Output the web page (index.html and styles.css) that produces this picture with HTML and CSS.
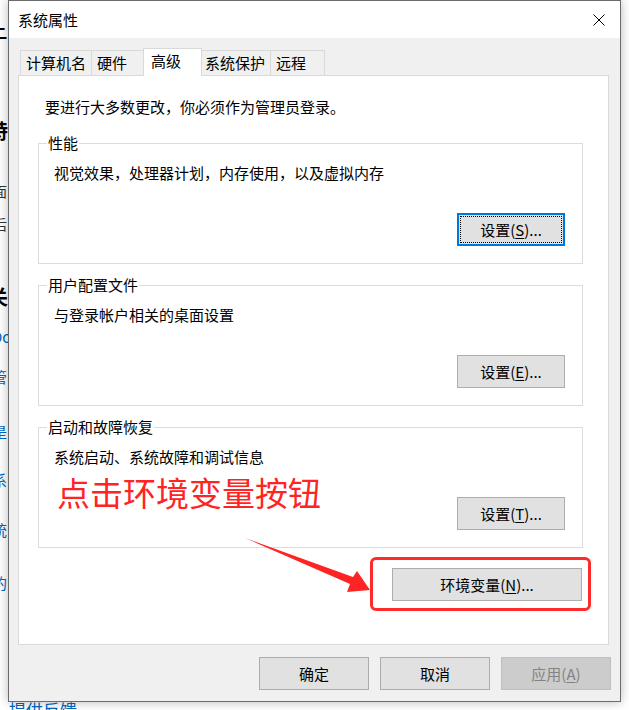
FILE: index.html
```html
<!DOCTYPE html>
<html lang="zh-CN">
<head>
<meta charset="utf-8">
<title>系统属性</title>
<link rel="stylesheet" href="styles.css">
</head>
<body>
<div class="desktop">
  <div class="bgwin">
    <div class="bg-h">关于</div>
    <div class="bg-b">特</div>
    <div class="bg-s bg-s1">面</div>
    <div class="bg-s bg-s2">后</div>
    <div class="bg-h2">关</div>
    <div class="bg-l bg-l1">Do</div>
    <div class="bg-l bg-l2">管</div>
    <div class="bg-l bg-l3">是</div>
    <div class="bg-l bg-l4">系</div>
    <div class="bg-l bg-l5">统</div>
    <div class="bg-l bg-l6">的</div>
    <div class="bg-feedback">提供反馈</div>
  </div>

  <div class="dialog">
    <div class="titlebar">
      <span class="title">系统属性</span>
      <span class="close">
        <svg width="12" height="12" viewBox="0 0 12 12"><path d="M0.5 0.5 L11.5 11.5 M11.5 0.5 L0.5 11.5" stroke="#000" stroke-width="1" fill="none"/></svg>
      </span>
    </div>
    <div class="client">
      <div class="tabs">
        <div class="tab">计算机名</div>
        <div class="tab">硬件</div>
        <div class="tab selected">高级</div>
        <div class="tab">系统保护</div>
        <div class="tab">远程</div>
      </div>
      <div class="panel">
        <p class="note">要进行大多数更改，你必须作为管理员登录。</p>
        <fieldset class="group first">
          <legend>性能</legend>
          <p class="desc">视觉效果，处理器计划，内存使用，以及虚拟内存</p>
          <div class="actions"><button class="btn small focused">设置(<u>S</u>)...</button></div>
        </fieldset>
        <fieldset class="group">
          <legend>用户配置文件</legend>
          <p class="desc">与登录帐户相关的桌面设置</p>
          <div class="actions"><button class="btn small">设置(<u>E</u>)...</button></div>
        </fieldset>
        <fieldset class="group">
          <legend>启动和故障恢复</legend>
          <p class="desc">系统启动、系统故障和调试信息</p>
          <div class="actions"><button class="btn small">设置(<u>T</u>)...</button></div>
        </fieldset>
        <div class="env-row"><button class="btn env">环境变量(<u>N</u>)...</button></div>
      </div>
      <div class="footer">
        <button class="btn wide">确定</button>
        <button class="btn wide">取消</button>
        <button class="btn wide" disabled>应用(<u>A</u>)</button>
      </div>
    </div>
  </div>

  <div class="annot">
    <div class="callout-text">点击环境变量按钮</div>
    <div class="callout-box"></div>
    <svg class="callout-arrow" width="629" height="710" viewBox="0 0 629 710">
      <polygon points="245,538 353,577 357,571 370,590 347,592 350,584" fill="#ff2424"/>
    </svg>
  </div>
</div>
</body>
</html>
```

FILE: styles.css
```css
* { box-sizing: border-box; }
html, body { margin: 0; padding: 0; }
body {
  width: 629px;
  height: 710px;
  overflow: hidden;
  background: #fff;
  font-family: "Noto Sans CJK SC", "Noto Sans", sans-serif;
  font-size: 15px;
  color: #000;
}
.desktop {
  position: relative;
  width: 629px;
  height: 710px;
  overflow: hidden;
  background: #fff;
}

/* background window fragments */
.bgwin {
  position: absolute;
  left: -8px;
  top: 0;
  width: 140px;
  height: 710px;
  white-space: nowrap;
}
.bg-h { font-size: 28px; line-height: 36px; height: 36px; margin-top: 20px; margin-left: -40px; }
.bg-b { font-size: 20px; line-height: 22px; height: 22px; margin-top: 64px; margin-left: -4px; font-weight: bold; }
.bg-s { font-size: 14px; line-height: 20px; height: 20px; color: #333; margin-left: 1px; }
.bg-s1 { margin-top: 39px; }
.bg-s2 { margin-top: 13px; }
.bg-h2 { font-size: 20px; line-height: 22px; height: 22px; margin-top: 52px; margin-left: -4px; font-weight: bold; }
.bg-l { font-size: 15px; line-height: 20px; height: 20px; color: #0067c0; }
.bg-l1 { margin-top: 19px; }
.bg-l2 { margin-top: 20px; }
.bg-l3 { margin-top: 35px; }
.bg-l4 { margin-top: 28px; }
.bg-l5 { margin-top: 30px; }
.bg-l6 { margin-top: 33px; }
.bg-feedback { font-size: 17px; line-height: 20px; color: #0067c0; margin-top: 107px; margin-left: 17px; }

/* dialog */
.dialog {
  position: relative;
  z-index: 1;
  margin-left: 8px;
  width: 613px;
  height: 702px;
  border: 1px solid #6b6b6b;
  background: #f0f0f0;
  box-shadow: 0 0 10px rgba(0, 0, 0, 0.28);
  display: flex;
  flex-direction: column;
}
.titlebar {
  height: 37px;
  flex: none;
  background: #fff;
  display: flex;
  align-items: center;
  justify-content: space-between;
  padding-left: 9px;
}
.title { font-size: 15px; line-height: 20px; }
.close {
  width: 42px;
  height: 37px;
  display: flex;
  align-items: center;
  justify-content: center;
}
.close svg { display: block; }

.client {
  flex: 1;
  display: flex;
  flex-direction: column;
  padding: 10px 9px 11px 9px;
}
.tabs {
  display: flex;
  align-items: flex-end;
  height: 27px;
  padding-left: 2px;
}
.tab {
  height: 25px;
  min-width: 55px;
  padding: 0 5px;
  border: 1px solid #d9d9d9;
  border-bottom: none;
  margin-left: -1px;
  background: #f0f0f0;
  font-size: 15px;
  line-height: 24px;
  white-space: nowrap;
}
.tab:first-child { margin-left: 0; }
.tab.selected {
  position: relative;
  z-index: 1;
  height: 28px;
  min-width: 59px;
  padding: 0 7px;
  margin: 0 -2px -1px -3px;
  background: #fff;
  line-height: 24px;
}

.panel {
  height: 570px;
  margin-right: 2px;
  border: 1px solid #d9d9d9;
  background: #fff;
  padding-top: 21px;
  display: flex;
  flex-direction: column;
}
.note {
  margin: 0 0 0 26px;
  font-size: 15px;
  line-height: 20px;
}
.group {
  margin: 11px 25px 0 19px;
  min-width: 0;
  border: 1px solid #dcdcdc;
  padding: 0 17px 17px 15px;
}
.group.first { margin-top: 16px; }
.group legend {
  font-size: 15px;
  line-height: 20px;
  padding: 0 1px;
  margin-left: -7px;
}
.desc {
  margin: 10px 0 0 0;
  font-size: 15px;
  line-height: 20px;
}
.actions {
  margin-top: 30px;
  display: flex;
  justify-content: flex-end;
}

.btn {
  font-family: inherit;
  font-size: 15px;
  color: #000;
  height: 33px;
  line-height: 31px;
  padding: 0;
  background: #e1e1e1;
  border: 1px solid #adadad;
  border-radius: 0;
  white-space: nowrap;
}
.btn u { text-decoration-thickness: 1px; text-underline-offset: 2px; }
.btn.small { width: 108px; }
.btn.focused {
  position: relative;
  border: 2px solid #0078d7;
  line-height: 29px;
}
.btn.focused::after {
  content: "";
  position: absolute;
  left: 1px;
  top: 1px;
  right: 1px;
  bottom: 1px;
  border: 1px dotted #000;
}
.btn.env { width: 190px; }
.btn.wide { width: 110px; }
.btn:disabled {
  background: #cccccc;
  border-color: #bfbfbf;
  color: #838383;
}

.env-row {
  margin-top: 20px;
  display: flex;
  justify-content: flex-end;
  padding-right: 26px;
}
.footer {
  margin-top: 12px;
  display: flex;
  justify-content: flex-end;
  gap: 11px;
}

/* annotation overlay */
.annot {
  position: absolute;
  left: 0;
  top: 0;
  width: 629px;
  height: 710px;
  z-index: 2;
  pointer-events: none;
}
.callout-text {
  position: absolute;
  left: 57px;
  top: 475px;
  font-size: 33px;
  line-height: 34px;
  color: #ff2424;
  white-space: nowrap;
}
.callout-box {
  position: absolute;
  left: 370px;
  top: 557px;
  width: 221px;
  height: 54px;
  border: 3px solid #ff2a2a;
  border-radius: 6px;
}
.callout-arrow {
  position: absolute;
  left: 0;
  top: 0;
}
```
